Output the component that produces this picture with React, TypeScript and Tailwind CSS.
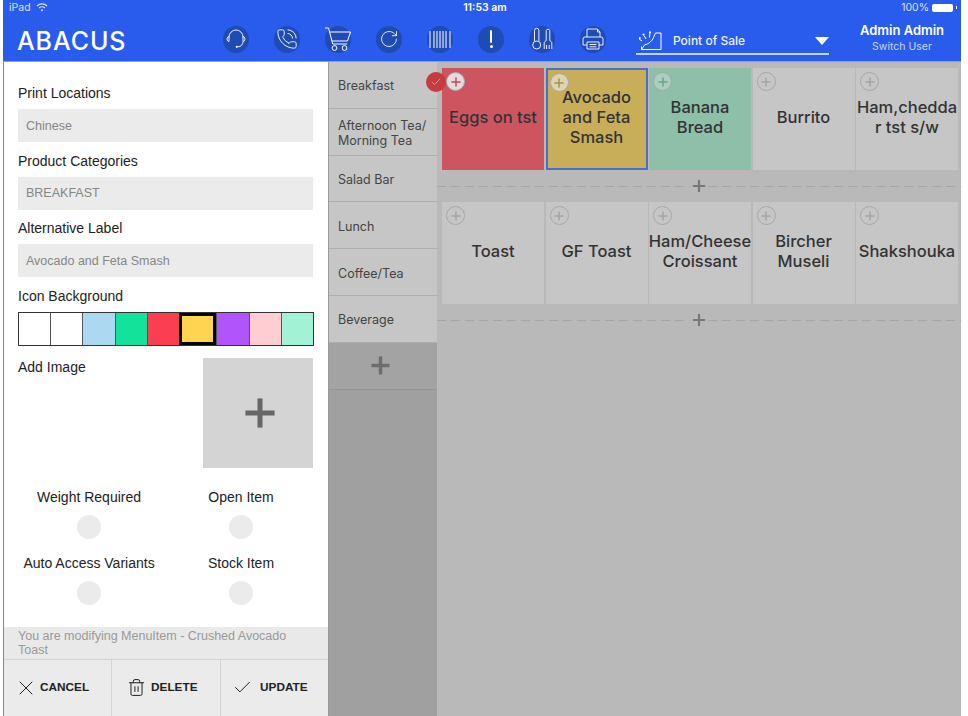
import { Check, PhoneCall, Plus, RotateCw, Trash2, X } from "lucide-react";

const sans = "font-['Liberation_Sans',Arial,sans-serif]";
const inter = "font-['Inter',sans-serif]";

const swatches = ["bg-white", "bg-white", "bg-[#add8f2]", "bg-[#13e29a]", "bg-[#fb3f50]", "bg-[#ffd54f]", "bg-[#b154fb]", "bg-[#ffcdd2]", "bg-[#a2f3d6]"];
const categories = ["Breakfast", "Afternoon Tea/ Morning Tea", "Salad Bar", "Lunch", "Coffee/Tea", "Beverage"];

const rowOne = [
  { name: "Eggs on tst", bg: "bg-[#cd5560]", plus: "text-[#c04a56] bg-[#e4dcdc]" },
  { name: "Avocado and Feta Smash", bg: "bg-[#c9ae5a]", plus: "text-[#ab9340] bg-[#dcd4b4]", selected: true },
  { name: "Banana Bread", bg: "bg-[#8dbfa9]", plus: "text-[#6fa48d] bg-[#a9cfbe]" },
  { name: "Burrito" },
  { name: "Ham,cheddar tst s/w", breakAll: true },
];
const rowTwo = [{ name: "Toast" }, { name: "GF Toast" }, { name: "Ham/Cheese Croissant" }, { name: "Bircher Museli" }, { name: "Shakshouka" }];

function HeadsetIcon() {
  return (
    <svg width="26" height="26" viewBox="0 0 26 26" fill="none" stroke="white" strokeWidth="0.9">
      <path d="M6 11.5V11a7 7 0 0 1 14 0v.5" />
      <path d="M6 10.5a2.6 2.6 0 0 0-2 2.6 2.6 2.6 0 0 0 2 2.5z" />
      <path d="M20 10.5a2.6 2.6 0 0 1 2 2.6 2.6 2.6 0 0 1-2 2.5z" />
      <path d="M20 15.6c0 3-2 5-5 5.2" />
      <circle cx="13.8" cy="20.8" r="1.1" fill="white" stroke="none" />
    </svg>
  );
}

function CartIcon() {
  return (
    <svg width="28" height="26" viewBox="0 0 28 26" fill="none" stroke="white" strokeWidth="1" className="shrink-0">
      <path d="M1 2h3.5l4.2 16h14.5" />
      <path d="M5.5 6h21l-3 9H8" />
      <circle cx="10.5" cy="22" r="2.4" />
      <circle cx="20.5" cy="22" r="2.4" />
    </svg>
  );
}

function BarcodeIcon() {
  return (
    <svg width="26" height="26" viewBox="0 0 26 26" fill="none" stroke="white" strokeWidth="1">
      <path d="M3 5v17M7 5v17M10 5v17M13 5v17M16 5v17M19 5v17M23 5v17" />
    </svg>
  );
}

function UtensilsIcon() {
  return (
    <svg width="26" height="26" viewBox="0 0 26 26" fill="none" stroke="white" strokeWidth="0.9">
      <path d="M5.5 15V4.5a2.2 2.2 0 0 1 4.4 0V15" />
      <circle cx="7.7" cy="19" r="4" />
      <path d="M15.2 23v-6c0-1.2 1-1.8 2-2.3V4.5a1.9 1.9 0 0 1 3.6 0v10.2c1 .5 2 1.1 2 2.3v6" />
      <path d="M17.6 23v-4M20.2 23v-4" />
    </svg>
  );
}

function PrinterIcon() {
  return (
    <svg width="26" height="26" viewBox="0 0 26 26" fill="none" stroke="white" strokeWidth="0.9">
      <path d="M7 11V3h10.5L20 6v5" />
      <path d="M17.5 3v3H20" />
      <path d="M7 19H3v-6a2 2 0 0 1 2-2h16a2 2 0 0 1 2 2v6h-4" />
      <path d="M7 16h12v7H7zM9.5 18.5h7M9.5 20.8h7" />
    </svg>
  );
}

function RegisterIcon() {
  return (
    <svg width="24" height="20" viewBox="0 0 24 20" fill="none" stroke="white" strokeWidth="1">
      <path d="M3.5 18.5h19.5V2h-5.5l-2 4.5c-1.5 4-5 6.5-9 7.5z" />
      <path d="M3.5 18.5v-3M1 8l3 2M6 4.5l2 3.5M12 1.5l-.5 5" />
      <circle cx="1.8" cy="7" r="1" fill="white" stroke="none" />
      <circle cx="5.5" cy="3.5" r="1" fill="white" stroke="none" />
      <circle cx="12" cy="1.2" r="1" fill="white" stroke="none" />
    </svg>
  );
}

function NavIcon({ children }: { children: React.ReactNode }) {
  return <div className="flex h-[27px] w-[26px] items-center justify-center rounded-full bg-[#1f4bb5]">{children}</div>;
}

function PlusBadge({ className = "text-[#a5a5a5]", selected }: { className?: string; selected?: boolean }) {
  return (
    <div className={`absolute z-20 flex h-[19px] w-[19px] items-center justify-center rounded-full border border-[#a8a8a8] ${selected ? "left-[2px] top-[3px]" : "left-[4px] top-[4px]"} ${className}`}>
      <Plus size={14} strokeWidth={2.6} />
    </div>
  );
}

type TileData = { name: string; bg?: string; plus?: string; selected?: boolean; breakAll?: boolean };

function Tile({ name, bg = "bg-[#c6c6c6]", plus, selected, breakAll }: TileData) {
  return (
    <div className={`relative flex h-[102px] items-center justify-center pb-[4px] text-center text-[16.5px] font-medium leading-[20px] text-[#333333] ${bg} ${selected ? "border-2 border-[#4a6fc4]" : ""} ${breakAll ? "break-all" : ""}`}>
      <PlusBadge className={plus} selected={selected} />
      <span className={breakAll ? "w-full" : "px-1"}>{name}</span>
    </div>
  );
}

function RowDivider() {
  return (
    <div className="-ml-[5px] flex h-[32px] items-center">
      <div className="h-px flex-1 bg-[repeating-linear-gradient(90deg,#a6a6a6_0_9px,transparent_9px_14px)]" />
      <Plus size={18} strokeWidth={2.2} absoluteStrokeWidth className="text-[#787878]" />
      <div className="h-px flex-1 bg-[repeating-linear-gradient(90deg,#a6a6a6_0_9px,transparent_9px_14px)]" />
    </div>
  );
}

function Field({ label, value }: { label: string; value: string }) {
  return (
    <div>
      <div className="mb-[8px] text-[14px] leading-[15px] text-[#222222]">{label}</div>
      <div className="flex h-[33px] items-center bg-[#ebebeb] px-[8px] pt-[1px] text-[12.5px] text-[#868686]">{value}</div>
    </div>
  );
}

function Toggle({ label }: { label: string }) {
  return (
    <div className="flex flex-col items-center">
      <div className="mb-[10px] text-[14px] leading-[16px] text-[#222222]">{label}</div>
      <div className="h-[24px] w-[24px] rounded-full bg-[#ebebeb]" />
    </div>
  );
}

function ActionButton({ icon, label, className }: { icon: React.ReactNode; label: string; className: string }) {
  return (
    <div className={`flex items-center border-r border-[#d4d4d4] pb-[1px] text-[11.8px] font-bold text-[#222222] ${className}`}>
      {icon}
      <span>{label}</span>
    </div>
  );
}

export default function App() {
  return (
    <div className={`h-[716px] w-[968px] overflow-hidden bg-white pl-[3px] pr-[7px] ${sans}`}>
      <header className={`h-[62px] border-b border-[#7f9ef2] bg-[#295cec] text-white ${inter}`}>
        <div className="grid h-[15px] grid-cols-3 items-center pl-[6px] pr-[4px] text-[10.5px] text-[#d8e2fc]">
          <div className="flex items-center gap-[5px]">
            <span>iPad</span>
            <svg width="12" height="9" viewBox="0 0 12 9" fill="none" stroke="#d8e2fc" strokeWidth="1.2">
              <path d="M1 3a7 7 0 0 1 10 0M3 5a4.2 4.2 0 0 1 6 0" />
              <circle cx="6" cy="7.2" r="1" fill="#d8e2fc" stroke="none" />
            </svg>
          </div>
          <div className="pl-[4px] text-center font-semibold text-white">11:53 am</div>
          <div className="flex items-center justify-end gap-[3px]">
            <span>100%</span>
            <div className="h-[8px] w-[21px] rounded-[2px] bg-white" />
            <div className="h-[3px] w-[1px] bg-white" />
          </div>
        </div>

        <div className="flex h-[46px] items-center">
          <div className="w-[220px] pl-[14px] pt-[7px] text-[25px] font-medium leading-none tracking-[0.9px]">ABACUS</div>
          <div className="flex gap-[25px] pt-[2px]">
            <NavIcon><HeadsetIcon /></NavIcon>
            <NavIcon><PhoneCall size={22} strokeWidth={1} /></NavIcon>
            <NavIcon><CartIcon /></NavIcon>
            <NavIcon><RotateCw size={20} strokeWidth={1} /></NavIcon>
            <NavIcon><BarcodeIcon /></NavIcon>
            <NavIcon>
              <div className="flex flex-col items-center gap-[2px]">
                <div className="h-[13px] w-[2px] rounded-full bg-white" />
                <div className="h-[3px] w-[3px] rounded-full bg-white" />
              </div>
            </NavIcon>
            <NavIcon><UtensilsIcon /></NavIcon>
            <NavIcon><PrinterIcon /></NavIcon>
          </div>
          <div className="mb-[6px] ml-[30px] flex h-[30px] w-[193px] items-center self-end border-b-2 border-[#c6d4fa] pl-[2px] pt-[3px]">
            <RegisterIcon />
            <span className="ml-[11px] text-[12px] font-medium text-[#eef2ff]">Point of Sale</span>
            <div className="ml-auto h-0 w-0 border-x-[7.5px] border-t-[8px] border-x-transparent border-t-white" />
          </div>
          <div className="flex-1 pb-[1px] pl-[14px] text-center">
            <div className="text-[13px] font-semibold leading-[18px]">Admin Admin</div>
            <div className="text-[10.5px] leading-[16px] text-[#c9d6fa]">Switch User</div>
          </div>
        </div>
      </header>

      <div className="flex h-[654px]">
        <aside className="flex w-[325px] flex-col border-l border-[#888888] bg-white">
          <div className="pl-[14px] pr-[15px] pt-[24px]">
            <div className="flex flex-col gap-[11.5px]">
              <Field label="Print Locations" value="Chinese" />
              <Field label="Product Categories" value="BREAKFAST" />
              <Field label="Alternative Label" value="Avocado and Feta Smash" />
              <div>
                <div className="mb-[8px] text-[14px] leading-[15px] text-[#222222]">Icon Background</div>
                <div className="flex h-[34px] w-[296px] border border-[#333333]">
                  {swatches.map((color, i) => (
                    <div key={i} className={`flex-1 ${color} ${i === 5 ? "border-[3px] border-black" : i === 0 ? "" : "border-l border-[#555555]"}`} />
                  ))}
                </div>
              </div>
            </div>

            <div className="mt-[12.5px] flex items-start justify-between">
              <div className="pt-[1px] text-[14px] leading-[16px] text-[#222222]">Add Image</div>
              <div className="flex h-[110px] w-[110px] items-center justify-center bg-[#d4d4d4] pl-[3px]">
                <Plus size={50} strokeWidth={5} absoluteStrokeWidth strokeLinecap="butt" className="text-[#666666]" />
              </div>
            </div>

            <div className="mt-[21px] grid grid-cols-[142px_162px] gap-y-[16px]">
              <Toggle label="Weight Required" />
              <Toggle label="Open Item" />
              <Toggle label="Auto Access Variants" />
              <Toggle label="Stock Item" />
            </div>
          </div>

          <div className="mt-auto border-b border-[#d4d4d4] bg-[#e9e9e9] px-[14px] py-[2px] text-[12.5px] leading-[14px] text-[#999999]">
            You are modifying MenuItem - Crushed Avocado Toast
          </div>
          <div className="flex h-[56px] bg-[#ebebeb]">
            <ActionButton className="w-[108px] gap-[2px] pl-[10px]" label="CANCEL" icon={<X size={24} strokeWidth={1} absoluteStrokeWidth />} />
            <ActionButton className="w-[109px] gap-[5px] pl-[15px]" label="DELETE" icon={<Trash2 size={19} strokeWidth={1} absoluteStrokeWidth />} />
            <ActionButton className="flex-1 gap-[7px] border-r-0 pl-[11px]" label="UPDATE" icon={<Check size={21} strokeWidth={1} absoluteStrokeWidth />} />
          </div>
        </aside>

        <nav className={`w-[109px] border-l border-[#9a9a9a] bg-[#a0a0a0] text-[12.5px] leading-[15px] text-[#444444] ${inter}`}>
          {categories.map((cat) => (
            <div key={cat} className="flex h-[46.8px] items-center border-b border-[#aeaeae] bg-[#c6c6c6] pl-[9px] pr-[9px] pt-[2px]">
              {cat}
            </div>
          ))}
          <div className="flex h-[46.8px] items-center justify-center border-b border-[#969696] bg-[#a3a3a3] pb-[1px] pr-[6px]">
            <Plus size={31} strokeWidth={3.5} absoluteStrokeWidth strokeLinecap="butt" className="text-[#6e6e6e]" />
          </div>
        </nav>

        <main className={`relative flex-1 bg-[#b9b9b9] pl-[5px] pt-[6px] ${inter}`}>
          <div className="absolute left-[-11px] top-[10px] z-10 flex h-[20px] w-[20px] items-center justify-center rounded-full bg-[#c73a3e] text-[#e8c8c8]">
            <Check size={12} strokeWidth={1.2} />
          </div>
          <div className="grid w-[516px] grid-cols-5 gap-x-[1.5px]">
            {rowOne.map((t) => <Tile key={t.name} {...t} />)}
          </div>
          <RowDivider />
          <div className="grid w-[516px] grid-cols-5 gap-x-[1.5px]">
            {rowTwo.map((t) => <Tile key={t.name} {...t} />)}
          </div>
          <RowDivider />
        </main>
      </div>
    </div>
  );
}
